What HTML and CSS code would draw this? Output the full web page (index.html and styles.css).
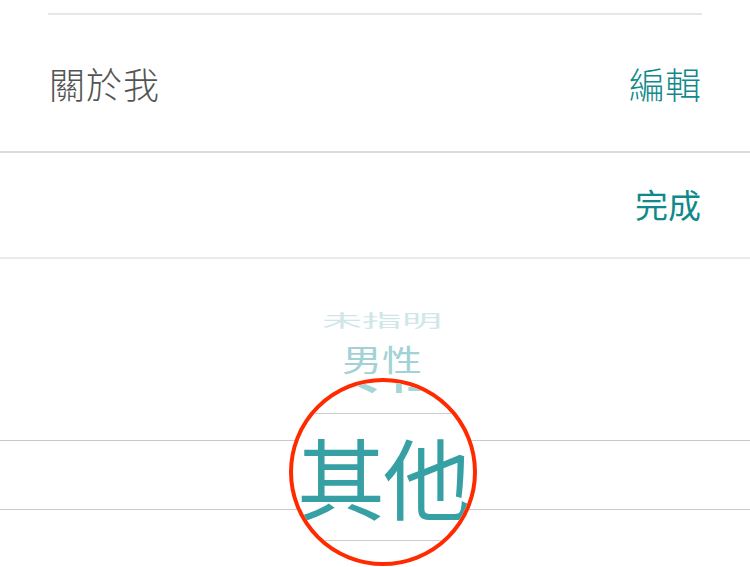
FILE: index.html
```html
<!DOCTYPE html>
<html lang="zh-Hant">
<head>
<meta charset="utf-8">
<title>關於我</title>
<link rel="stylesheet" href="styles.css">
</head>
<body>
<div class="screen">
  <div class="top-rule"></div>
  <div class="about-row">
    <span class="about-label">關於我</span>
    <span class="edit-link">編輯</span>
  </div>
  <div class="rule rule-dark"></div>
  <div class="toolbar">
    <span class="done-btn">完成</span>
  </div>
  <div class="rule rule-light"></div>
  <div class="picker">
    <div class="wheel-item far"><span>未指明</span></div>
    <div class="wheel-item near"><span>男性</span></div>
    <div class="wheel-item mid"><span>女性</span></div>
    <div class="wheel-selected"><span>其他</span></div>
    <div class="lens">
      <div class="lens-prev"><span>女性</span></div>
      <div class="lens-band"><span>其他</span></div>
    </div>
  </div>
</div>
</body>
</html>
```
FILE: styles.css
```css
html, body {
  margin: 0;
  padding: 0;
  background: #ffffff;
}
body {
  font-family: "Noto Sans CJK TC", "Noto Sans", sans-serif;
  width: 750px;
  height: 567px;
  overflow: hidden;
}
.screen {
  display: flex;
  flex-direction: column;
  padding-top: 13px;
}
.top-rule {
  height: 2px;
  margin: 0 48px;
  background: #e7e7e7;
}
.about-row {
  height: 136px;
  display: flex;
  align-items: center;
  justify-content: space-between;
  padding: 0 49px 0 49px;
}
.about-label {
  font-size: 36px;
  font-weight: 300;
  color: #545454;
  line-height: 1;
  margin-top: -1px;
  letter-spacing: 1px;
}
.edit-link {
  font-size: 36px;
  font-weight: 300;
  color: #12898c;
  line-height: 1;
  margin-top: -1px;
}
.rule {
  height: 2px;
}
.rule-dark { background: #dcdcdc; }
.rule-light { background: #ebebeb; }
.toolbar {
  height: 104px;
  display: flex;
  align-items: center;
  justify-content: flex-end;
  padding-right: 49px;
}
.done-btn {
  font-size: 33px;
  color: #0f8a8c;
  line-height: 1;
  margin-top: -2px;
}
.picker {
  position: relative;
  flex: 1;
  display: flex;
  flex-direction: column;
  padding-top: 42px;
  height: 308px;
}
.wheel-item {
  display: flex;
  justify-content: center;
  align-items: center;
  line-height: 1;
  padding-left: 14px;
}
.wheel-item span {
  display: inline-block;
  font-size: 40px;
}
.far {
  height: 38px;
}
.far span {
  color: #cfe7e9;
  transform: scaleY(0.44);
}
.near {
  height: 40px;
}
.near span {
  color: #a2d2d5;
  transform: scaleY(0.74);
  margin-top: -3px;
}
.mid {
  height: 61px;
}
.mid span {
  color: #7fc2c6;
  font-size: 42px;
  visibility: hidden;
}
.wheel-selected {
  height: 68px;
  border-top: 1px solid #c9c9c9;
  border-bottom: 1px solid #c9c9c9;
  display: flex;
  align-items: center;
  justify-content: center;
  padding-left: 14px;
}
.wheel-selected span {
  font-size: 46px;
  color: #3aa0a6;
  line-height: 1;
  visibility: hidden;
}
.lens {
  position: absolute;
  left: 289px;
  top: 119px;
  width: 180px;
  height: 180px;
  border: 4px solid #ff2a00;
  border-radius: 50%;
  background: #ffffff;
  overflow: hidden;
  display: flex;
  flex-direction: column;
}
.lens-prev {
  height: 31px;
  flex: none;
  display: flex;
  align-items: flex-end;
  justify-content: center;
  line-height: 1;
}
.lens-prev span {
  display: inline-block;
  font-size: 76px;
  color: #a6d5d8;
  margin-bottom: 21px;
  transform: scaleY(0.75);
  transform-origin: bottom center;
}
.lens-band {
  flex: none;
  height: 126px;
  border-top: 1px solid #cccccc;
  border-bottom: 1px solid #cccccc;
  display: flex;
  align-items: center;
  justify-content: center;
}
.lens-band span {
  font-size: 88px;
  line-height: 1;
  color: #36a0a5;
  letter-spacing: -2px;
  margin-top: -4px;
}
```
